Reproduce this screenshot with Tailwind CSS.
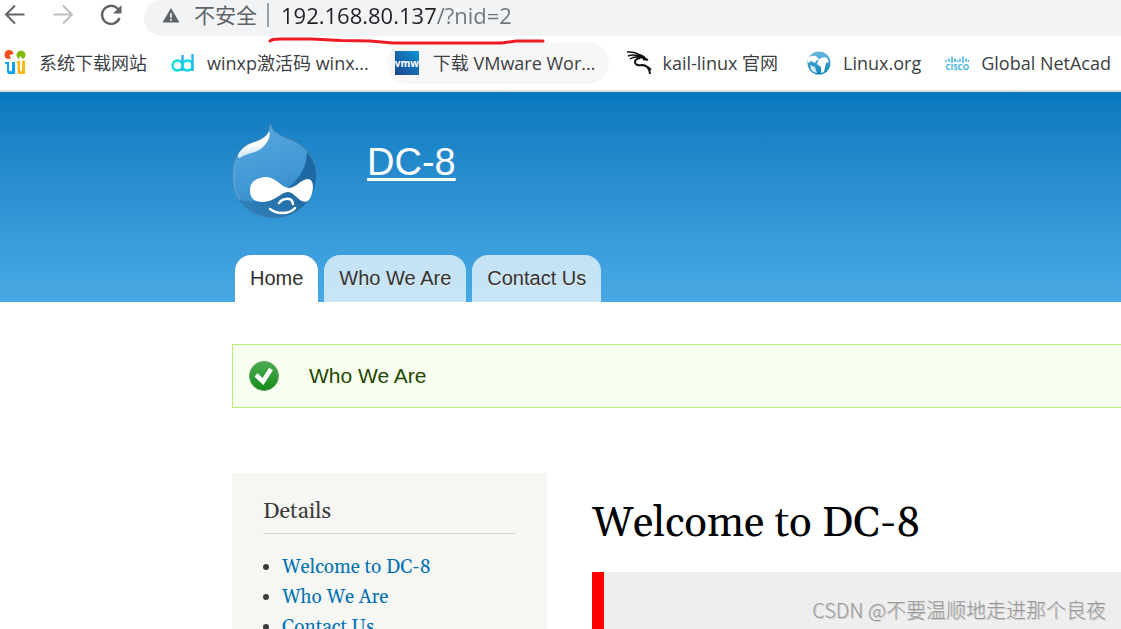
<!DOCTYPE html>
<html lang="zh-CN">
<head>
    <meta charset="UTF-8">
    <meta name="viewport" content="width=device-width, initial-scale=1.0">
    <title>Welcome to DC-8 | DC-8</title>
    <script src="https://cdn.jsdelivr.net/npm/@tailwindcss/browser@4"></script>
</head>
<body class="relative flex flex-col h-screen overflow-hidden bg-white font-['Open_Sans','Noto_Sans_CJK_SC',sans-serif]">

<!-- Browser toolbar -->
<div class="flex items-start h-9 shrink-0 overflow-hidden">
    <button class="w-7 pt-1 pl-1 shrink-0" aria-label="Back">
        <svg class="w-[22px] h-[22px]" viewBox="0 0 22 22" fill="none" stroke="#5f6368" stroke-width="2"><path d="M20.500 10.500H2.500M11 1.500L2 10.500L11 19.500"/></svg>
    </button>
    <button class="w-[22px] pt-1 ml-6 shrink-0" aria-label="Forward">
        <svg class="w-[22px] h-[22px]" viewBox="0 0 22 22" fill="none" stroke="#bdbfc1" stroke-width="2"><path d="M1.500 10.500H19.500M11 1.500L20 10.500L11 19.500"/></svg>
    </button>
    <button class="w-6 pt-1 ml-[26px] shrink-0" aria-label="Reload">
        <svg class="w-6 h-[22px]" viewBox="0 0 24 22"><path d="M19.500 14A9 9 0 1 1 17.500 4.500L19.500 6.500" fill="none" stroke="#5f6368" stroke-width="2.400"/><path d="M21.500 1V9.500H13z" fill="#5f6368"/></svg>
    </button>
    <form class="flex flex-1 items-center h-9 ml-5 pl-[18px] pb-1.5 bg-[#f1f3f4] rounded-l-full">
        <svg class="w-[18px] h-4 mr-0.5 shrink-0" viewBox="0 0 20 18"><path d="M10 1L19.500 17.500H.500z" fill="#5f6368"/><path d="M10 7v5M10 13.500v2" stroke="#f1f3f4" stroke-width="2"/></svg>
        <label for="url" class="ml-3 text-[21px] leading-8 text-[#5f6368] shrink-0">不安全</label>
        <span class="w-0.5 h-6 ml-2.5 bg-[#9aa0a6] shrink-0"></span>
        <input id="url" type="text" value="192.168.80.137/?nid=2" class="flex-1 min-w-0 ml-3 h-8 text-[22px] text-transparent bg-clip-text bg-linear-[90deg,#202124_155px,#70757a_155px] outline-none">
    </form>
</div>

<!-- Bookmarks bar -->
<nav class="flex items-center h-14 shrink-0 border-b-2 border-[#dadcde] text-lg text-[#3c4043] whitespace-nowrap overflow-hidden">
    <a href="#" class="flex items-center pl-[3px] shrink-0">
        <svg class="w-6 h-[26px] mr-3" viewBox="0 0 24 26">
            <path d="M5 9A4.500 4.500 0 1 1 10.500 4L6.500 5L8 8.500z" fill="#f25022"/>
            <path d="M16 9A4.500 4.500 0 1 1 20 9L17 6z" fill="#7fba00"/>
            <path d="M2 12H6V20Q6.500 22 9 21V12H12V24H5.500Q4 23.500 4 21V14H2z" fill="#0aa4ef"/>
            <path d="M13 12Q15 10.500 17 10.500V20Q17 22 19 21V10.500H22V24H15Q14.500 23 14.500 21V13z" fill="#fdb813"/>
        </svg>
        <span>系统下载网站</span>
    </a>
    <a href="#" class="flex items-center ml-6 shrink-0">
        <svg class="w-6 h-6 mr-3" viewBox="0 0 24 24" fill="none" stroke-width="2.400">
            <circle cx="6.500" cy="14.500" r="5" stroke="#10dcd8"/><path d="M11.500 4V20" stroke="#2aaaf0"/>
            <circle cx="16.500" cy="14.500" r="5" stroke="#08dce0"/><path d="M21.500 3V20" stroke="#20b8f0"/>
        </svg>
        <span>winxp激活码 winx...</span>
    </a>
    <a href="#" class="flex items-center h-[42px] ml-[18px] pl-2 pr-3.5 bg-[#f7f7f7] rounded-full shrink-0">
        <span class="flex items-center justify-center w-6 h-6 mr-3.5 bg-linear-to-tr from-[#1b428a] to-[#0095d8] text-white text-[10px] font-bold leading-none">vmw</span>
        <span>下载 VMware Wor...</span>
    </a>
    <a href="#" class="flex items-center ml-[18px] shrink-0">
        <svg class="w-[25px] h-6 mr-2.5" viewBox="0 0 25 24" fill="none" stroke="#111" stroke-width="1.500">
            <path d="M0 1Q7 .500 11 3T16 6M1 5Q7 2.500 14 6M3 8Q8 4.500 15 7"/>
            <path d="M13 4Q17 5 18 7L21 9L16 8.500" fill="#111"/>
            <path d="M13 7Q8 8 8 11Q8 15 15 14Q22 14 23 23M15 14Q21 15 24 19" stroke-width="2"/>
        </svg>
        <span>kail-linux 官网</span>
    </a>
    <a href="#" class="flex items-center ml-[29px] shrink-0">
        <svg class="w-6 h-6 mr-3" viewBox="0 0 24 24">
            <defs><linearGradient id="globe" x2="0" y2="1"><stop stop-color="#6bb8dc"/><stop offset="1" stop-color="#0b82ba"/></linearGradient></defs>
            <circle cx="12" cy="12" r="11.500" fill="url(#globe)"/>
            <path d="M1 7Q4 4 9 5L12 8L9 10L8 12L4 10L1 12zM12 8Q17 5 20 7L22 11L19 12L18 16L17 21L14 22L14 16L10 13z" fill="#fff"/>
            <path d="M3 14L8 16L10 22L6 21Q3 18 3 14" fill="#cde7f3"/>
        </svg>
        <span>Linux.org</span>
    </a>
    <a href="#" class="flex items-center ml-6 shrink-0">
        <span class="flex flex-col items-center w-6 mr-3 text-[#3fb1dc]">
            <svg class="w-6 h-[7px]" viewBox="0 0 24 7" stroke="currentColor" stroke-width="1.500"><path d="M1 4v2M4 2.500V6M7 .500V7M10 2.500V6M12.500 4v2M15 2.500V6M18 .500V7M21 2.500V6M23.500 4v2"/></svg>
            <span class="text-[8px] leading-[8px] font-bold">CISCO</span>
        </span>
        <span>Global NetAcad</span>
    </a>
</nav>

<!-- Marker stroke under the address -->
<svg class="absolute left-[268px] top-9 w-[278px] h-[9px]" viewBox="0 0 278 9" fill="none" stroke="#ed1c24" stroke-width="3" stroke-linecap="round" stroke-linejoin="round"><path d="M2 5Q4 3 12 3H43L73 4.500L102 5L125 7H234L248 5H275"/></svg>

<!-- Page -->
<div class="flex-1 min-h-0 overflow-hidden">
    <header class="flex flex-col justify-between h-[210px] pl-[231px] bg-linear-to-b from-[#0779bf] to-[#48a9e4] font-['Liberation_Sans',Arial,sans-serif]">
        <div class="flex items-start pt-[30px]">
            <a href="#" aria-label="Home">
                <svg class="w-[86px] h-24" viewBox="0 0 86 96">
                    <defs>
                        <linearGradient id="drop" x1=".3" x2=".6" y2="1"><stop stop-color="#58a8de"/><stop offset=".6" stop-color="#3f97d4"/><stop offset="1" stop-color="#2f80bd"/></linearGradient>
                        <linearGradient id="shade" x1="1" x2="0" y1="0" y2="1"><stop stop-color="#1a659f"/><stop offset=".5" stop-color="#226ea7"/><stop offset="1" stop-color="#3584bd"/></linearGradient>
                        <linearGradient id="shine" x1=".35" x2=".6" y2="1"><stop offset=".5" stop-color="#fff"/><stop offset="1" stop-color="#fff" stop-opacity=".6"/></linearGradient>
                    </defs>
                    <path d="M39.500 1C41 7 43 9 46 11C51 15 56 16 61 18C67 21 72 24 76 29C82 36 85 44 85 53C85 78 66 95.500 43 95.500C19 95.500 1 78 1 54C1 44 4 35 9 29C13 24 17 22 22 20C28 18 33 16 36 12C38 9 38.500 5 39.500 1z" fill="url(#drop)" stroke="#4584ae" stroke-width="1"/>
                    <path d="M76 30C82 37 85 45 85 53C85 78 66 95.500 43 95.500C28 95.500 15 88 8 78Q21 81 33 78C48 73 76 59 76 30z" fill="url(#shade)"/>
                    <path d="M4 44Q1 72 9 77" fill="none" stroke="#63a9d5" stroke-width="1"/>
                    <path d="M38.500 9C39 15 38 19 31 26C24 32 15 31 9 36C7 36 6 34 8 31C12 25 17 22 24 20Q34 17 38.500 9z" fill="url(#shine)"/>
                    <path d="M19 68C19 59 27 55 36 55C46 56 51 66 58 66C65 66 70 57 77 57C82 57 83 65 81 71C79 79 75 82 69 78C64 74 61 70 57 70C50 70 44 80 31 80C22 80 19 75 19 68z" fill="#fff"/>
                    <path d="M48 81Q51 77 55 77Q61 76 62 82M39 87Q44 91 51 91Q60 91 64 86" fill="none" stroke="#fff" stroke-width="2.500" stroke-linecap="round"/>
                </svg>
            </a>
            <a href="#" class="ml-[50px] mt-[18px] text-[38px] leading-[44px] text-white underline decoration-[3px] underline-offset-[3px]">DC-8</a>
        </div>
        <nav class="flex gap-1.5 pl-1 text-[20px] leading-[46px] text-[#333] text-shadow-[0_1px_0_#eee]">
            <a href="#" class="h-[47px] px-[15px] bg-white rounded-t-2xl">Home</a>
            <a href="#" class="h-[47px] px-[15px] bg-white/70 rounded-t-2xl">Who We Are</a>
            <a href="#" class="h-[47px] px-[15px] bg-white/70 rounded-t-2xl">Contact Us</a>
        </nav>
    </header>

    <div class="flex items-center h-16 mt-[42px] ml-[232px] pl-4 border border-r-0 border-[#be7] bg-[#f8fff0] font-['Liberation_Sans',Arial,sans-serif]">
        <svg class="w-[30px] h-[30px] mr-[30px]" viewBox="0 0 30 30">
            <defs><linearGradient id="ok" x2="0" y2="1"><stop stop-color="#4caf50"/><stop offset="1" stop-color="#158a1b"/></linearGradient></defs>
            <circle cx="15" cy="15" r="14.500" fill="url(#ok)" stroke="#5f9d61"/>
            <path d="M7 14L14 20.500L22 8" fill="none" stroke="#fff" stroke-width="4.500"/>
        </svg>
        <p class="text-[21px] leading-8 text-[#234600]">Who We Are</p>
    </div>

    <div class="flex items-start mt-[65px] pl-[232px] font-[Georgia,Gelasio,'DejaVu_Serif',serif]">
        <aside class="w-[315px] h-96 shrink-0 px-[31px] pt-[22px] bg-[#f6f6f2]">
            <h2 class="pb-1 border-b border-[#d6d6d6] text-[22px] leading-[34px] text-[#3b3b3b] text-shadow-[0_1px_0_#fff]">Details</h2>
            <ul class="mt-[18px] pl-[19px] list-disc text-[19px] leading-[30px] text-[#3b3b3b]">
                <li><a href="#" class="text-[#0071b3]">Welcome to DC-8</a></li>
                <li><a href="#" class="text-[#0071b3]">Who We Are</a></li>
                <li><a href="#" class="text-[#0071b3]">Contact Us</a></li>
            </ul>
        </aside>
        <main class="flex-1 ml-[45px]">
            <h1 class="mt-[23px] text-[42px] leading-[56px] text-black whitespace-nowrap">Welcome to DC-8</h1>
            <div class="h-72 mt-5 border-l-12 border-[#f00] bg-[#eee]"></div>
        </main>
    </div>
</div>

<p class="absolute right-[15px] bottom-1 text-[20px] leading-[30px] font-light text-[#999] text-shadow-[1px_1px_0_#ccc] font-['Noto_Sans_CJK_SC',sans-serif]">CSDN @不要温顺地走进那个良夜</p>
</body>
</html>
